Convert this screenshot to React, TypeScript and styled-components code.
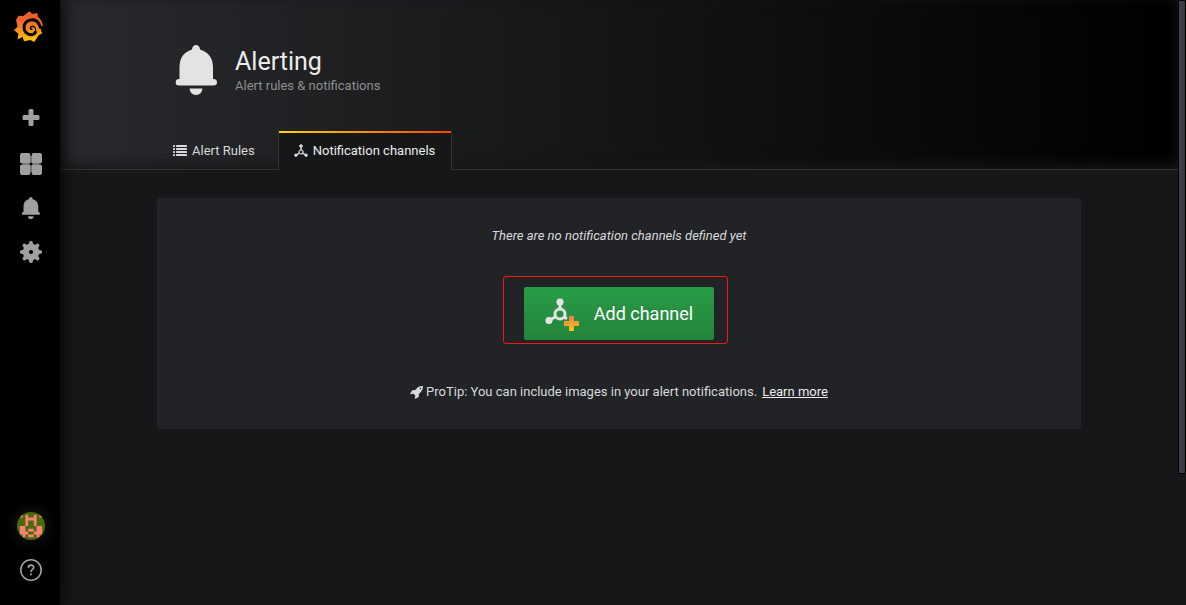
import React from "react";
import styled, { createGlobalStyle, css } from "styled-components";

const GlobalStyle = createGlobalStyle`
  *, *::before, *::after { box-sizing: border-box; }
  body {
    margin: 0;
    background: #161719;
    color: #d8d9da;
    font-family: Roboto, "Liberation Sans", sans-serif;
    font-size: 13px;
    line-height: 20px;
    overflow: hidden;
  }
`;

const Shell = styled.div`
  display: flex;
  min-height: 100vh;
`;

const SideMenu = styled.nav`
  display: flex;
  flex-direction: column;
  flex: none;
  width: 60px;
  padding-bottom: 13px;
  background: #000;
  box-shadow: 0 0 20px #000;
  z-index: 2;
`;

const LogoLink = styled.a`
  display: flex;
  align-items: flex-start;
  padding: 11px 14px 0;
  height: 98px;
`;

const Spacer = styled.div`
  flex: 1;
`;

const MenuLink = styled.a<{ $wide?: boolean }>`
  display: flex;
  align-items: center;
  height: 44px;
  padding-left: ${(p) => (p.$wide ? 17 : 20)}px;
  color: #9fa0a1;
`;

const Avatar = styled.svg`
  width: 28px;
  height: 28px;
  border-radius: 50%;
  box-shadow: 0 0 14px 2px #161719;
`;

const Content = styled.div`
  display: flex;
  flex-direction: column;
  flex: 1;
  min-width: 0;
`;

const ScrollTrack = styled.div`
  flex: none;
  width: 8px;
`;

const PageHeader = styled.header`
  background: linear-gradient(90deg, #292a2d, #000);
  box-shadow: inset 0 -4px 14px #161719;
  border-bottom: 1px solid #343436;
  padding-top: 45px;
`;

const Container = styled.div`
  max-width: 980px;
  margin: 0 auto;
  padding: 0 28px;
`;

const TitleRow = styled.div`
  display: flex;
  gap: 14px;
  height: 50px;
  margin: 0 0 36px 14px;
`;

const Title = styled.h1`
  margin: 3px 0 0;
  font-size: 25px;
  line-height: 28px;
  font-weight: 400;
  color: #ececec;
`;

const Subtitle = styled.div`
  color: #8e8e8e;
`;

const Tabs = styled.nav`
  display: flex;
`;

const Tab = styled.a<{ $active?: boolean }>`
  position: relative;
  display: flex;
  align-items: center;
  gap: 5px;
  height: 38px;
  margin-right: 9px;
  padding: 2px 14px 0 16px;
  color: #d8d9da;
  text-decoration: none;
  ${(p) =>
    p.$active &&
    css`
      height: 39px;
      margin: 0 0 -1px;
      padding: 0 16px 0 15px;
      color: #ececec;
      background: #161719;
      border: 1px solid #343436;
      border-width: 0 1px;
      border-radius: 2px 2px 0 0;
      &::before {
        content: "";
        position: absolute;
        top: 0;
        left: 0;
        right: 0;
        height: 2px;
        background: linear-gradient(90deg, #ffd500, #ff4400 99%);
      }
    `}
`;

const Panel = styled.section`
  display: flex;
  flex-direction: column;
  align-items: center;
  margin-top: 28px;
  padding: 28px 28px 27px;
  border-radius: 3px;
  background: #222326;
`;

const EmptyText = styled.p`
  margin: 0 0 41px;
  font-style: italic;
`;

const ButtonArea = styled.div`
  position: relative;
  margin-bottom: 42px;
`;

const Highlight = styled.div`
  position: absolute;
  top: -11px;
  bottom: -4px;
  left: -21px;
  right: -14px;
  border: 1px solid #f2180e;
  border-radius: 3px;
  pointer-events: none;
`;

const AddButton = styled.button`
  display: flex;
  align-items: center;
  gap: 14px;
  height: 53px;
  padding: 0 21px;
  border: 0;
  border-radius: 2px;
  background: linear-gradient(#299c46, #23843b);
  color: #fff;
  font: 400 18px/24px Roboto, "Liberation Sans", sans-serif;
  text-shadow: 0 -1px 0 rgba(0, 0, 0, 0.1);
`;

const ProTip = styled.div`
  display: flex;
  align-items: center;
  gap: 3px;
`;

const LearnMore = styled.a`
  margin-left: 2px;
  color: #ececec;
`;

const ScrollThumb = styled.div`
  position: fixed;
  top: 0;
  right: 0;
  width: 8px;
  height: 474px;
  border: 1px solid #000;
  background: linear-gradient(90deg, #424251, #36363c);
`;

const Logo = () => (
  <svg width="29" height="31" viewBox="42 33 87 93" aria-hidden="true">
    <linearGradient id="brand" x1="0" y1="0" x2="0" y2="1">
      <stop offset="0" stopColor="#f05a28" />
      <stop offset="0.3" stopColor="#f2642a" />
      <stop offset="1" stopColor="#fbca0a" />
    </linearGradient>
    <path
      fill="url(#brand)"
      d="M88 34L97 42L112 39L114 51Q126 59 128 77L123 92L127 100L116 106L103 126L91 120L72 124L68 111L53 118L55 101L42 90L53 80L48 60L56 47L70 48L78 42Z"
    />
    <g fill="none" stroke="#000" strokeLinecap="round" strokeLinejoin="round">
      <path d="M132 86L121 82C117 66 108 59 97 59C81 59 72 70 72 82C72 95 82 104 93 104C99 104 104 101 106 97" strokeWidth="9" />
      <path d="M105 98C108 92 107 84 103 81C98 77 92 79 91 84C91 87 94 89 96 87" strokeWidth="4" />
    </g>
  </svg>
);

const BellIcon = ({ width, height }: { width: number; height: number }) => (
  <svg width={width} height={height} viewBox="0 0 42 50" fill="currentColor" aria-hidden="true">
    <path d="M16.500 4.500C16.500 1.800 18.400 0 20.500 0S24.500 1.800 24.500 4.500C31.500 6.500 37.500 12 37.500 22V34H38Q41.500 34.300 41.500 37.500 41.500 40.500 38 40.500H3.500Q0 40.500 0 37.500 0 34.300 3.500 34H4V22C4 12 9.500 6.500 16.500 4.500Z" />
    <path d="M14 43.500H27Q26.300 50 20.500 50T14 43.500Z" />
  </svg>
);

const ChannelIcon = () => (
  <svg width="14" height="14" viewBox="0 0 14 14" fill="#d8d9da" stroke="#d8d9da" aria-hidden="true">
    <circle cx="7" cy="2" r="1.300" />
    <circle cx="1.900" cy="11.200" r="1.200" />
    <circle cx="12.100" cy="11.200" r="1.200" />
    <circle cx="7" cy="8" r="2" fill="none" strokeWidth="1.200" />
    <path d="M7 2V6.500M5.500 9L2 11.200M8.500 9L12 11.200" strokeWidth="1.400" />
  </svg>
);

const gearTeeth = [0, 45, 90, 135, 180, 225, 270, 315];

export default function App() {
  return (
    <>
      <GlobalStyle />
      <Shell>
        <SideMenu aria-label="Main menu">
          <LogoLink href="#" aria-label="Home">
            <Logo />
          </LogoLink>
          <MenuLink href="#" aria-label="Create">
            <svg width="22" height="22" viewBox="0 0 22 22" fill="currentColor">
              <rect x="8.500" y="0" width="5" height="17" rx="1.500" />
              <rect x="2.500" y="6" width="17" height="5" rx="1.500" />
            </svg>
          </MenuLink>
          <MenuLink href="#" aria-label="Dashboards">
            <svg width="22" height="22" viewBox="0 0 22 22" fill="currentColor">
              <path d="M10 3h2v16h-2zM3 10h16v2H3z" fill="#555" />
              <rect width="10.400" height="10.400" rx="2" />
              <rect x="11.600" width="10.400" height="10.400" rx="2" />
              <rect y="11.600" width="10.400" height="10.400" rx="2" />
              <rect x="11.600" y="11.600" width="10.400" height="10.400" rx="2" />
              <path d="M10 10h2v2h-2z" fill="#000" />
            </svg>
          </MenuLink>
          <MenuLink href="#" aria-label="Alerting">
            <BellIcon width={22} height={22} />
          </MenuLink>
          <MenuLink href="#" aria-label="Configuration">
            <svg width="22" height="22" viewBox="0 0 22 22" fill="currentColor">
              {gearTeeth.map((a) => (
                <path key={a} d="M8.500 4L9.400 0.800Q9.600 0 10.300 0H11.700Q12.400 0 12.600 0.800L13.500 4Z" transform={`rotate(${a} 11 11)`} />
              ))}
              <path fillRule="evenodd" d="M11 2.800a8.200 8.200 0 1 0 0 16.400a8.200 8.200 0 1 0 0-16.400zM11 8.900a2.100 2.100 0 1 1 0 4.200a2.100 2.100 0 1 1 0-4.200z" />
            </svg>
          </MenuLink>
          <Spacer />
          <MenuLink href="#" $wide aria-label="Profile">
            <Avatar viewBox="0 0 10 10">
              <rect width="10" height="10" fill="#4b6a0c" />
              <path
                fill="#fa8272"
                d="M1 1h1v1h-1zM8 1h1v1h-1zM3 1h1v1h2v-1h1v4h-1v-2h-2v2h-1zM1 5h2v2h1v1h-1v1h-1v-1h-1zM7 5h2v3h-1v1h-1v-1h-1v-1h1zM4 6h2v1h-2zM4 8h2v1h-2z"
              />
            </Avatar>
          </MenuLink>
          <MenuLink href="#" aria-label="Help">
            <svg width="22" height="22" viewBox="0 0 22 22" fill="none" stroke="currentColor">
              <circle cx="11" cy="11" r="10.200" strokeWidth="1.600" />
              <path d="M8.300 8.700C8.300 5.300 13.700 5.300 13.700 8.600C13.700 10.500 11 10.500 11 13" strokeWidth="1.700" />
              <path d="M11 14.500V16.300" strokeWidth="1.800" />
            </svg>
          </MenuLink>
        </SideMenu>
        <Content>
          <PageHeader>
            <Container>
              <TitleRow>
                <svg width="50" height="50" viewBox="-4.500 0 50 50" color="#e3e3e3" aria-hidden="true">
                  <BellIcon width={42} height={50} />
                </svg>
                <div>
                  <Title>Alerting</Title>
                  <Subtitle>Alert rules &amp; notifications</Subtitle>
                </div>
              </TitleRow>
              <Tabs aria-label="Alerting sections">
                <Tab href="#">
                  <svg width="14" height="14" viewBox="0 0 14 14" fill="currentColor" aria-hidden="true">
                    {[1, 4, 7, 10].map((y) => (
                      <g key={y}>
                        <rect y={y} width="2" height="2" rx="0.400" />
                        <rect x="3" y={y} width="11" height="2" rx="0.400" />
                      </g>
                    ))}
                  </svg>
                  Alert Rules
                </Tab>
                <Tab href="#" $active aria-current="page">
                  <ChannelIcon />
                  Notification channels
                </Tab>
              </Tabs>
            </Container>
          </PageHeader>
          <main>
            <Container>
              <Panel>
                <EmptyText>There are no notification channels defined yet</EmptyText>
                <ButtonArea>
                  <AddButton type="button">
                    <svg width="35" height="36" viewBox="0 0 35 36" aria-hidden="true">
                      <linearGradient id="plus" x1="0" y1="0" x2="0" y2="1">
                        <stop offset="0" stopColor="#ef7b48" />
                        <stop offset="1" stopColor="#fbc51a" />
                      </linearGradient>
                      <g fill="#e3e3e3" stroke="#e3e3e3">
                        <circle cx="15" cy="6" r="3.200" />
                        <circle cx="4" cy="24.500" r="3.200" />
                        <circle cx="15" cy="18" r="5" fill="none" strokeWidth="3" />
                        <path d="M15 6V13.500M11 20.500L4 24.500M18.500 21L22 22.500" strokeWidth="3" />
                      </g>
                      <path d="M24 20H29V25H34V30H29V35H24V30H19V25H24Z" fill="url(#plus)" />
                    </svg>
                    Add channel
                  </AddButton>
                  <Highlight />
                </ButtonArea>
                <ProTip>
                  <svg width="13" height="13" viewBox="0 0 1664 1664" fill="currentColor" aria-hidden="true">
                    <path d="M1440 320q0-40-28-68t-68-28-68 28-28 68 28 68 68 28 68-28 28-68zm224-288q0 249-75.500 430.500t-253.500 360.500q-81 80-195 176l-20 379q-2 16-16 26l-384 224q-7 4-16 4-12 0-23-9l-64-64q-13-14-8-32l85-276-281-281-276 85q-3 1-9 1-14 0-23-9l-64-64q-17-19-5-39l224-384q10-14 26-16l379-20q96-114 176-195 188-187 358-258t431-71q14 0 24 9.500t10 22.500z" />
                  </svg>
                  ProTip: You can include images in your alert notifications.
                  <LearnMore href="#">Learn more</LearnMore>
                </ProTip>
              </Panel>
            </Container>
          </main>
        </Content>
        <ScrollTrack />
      </Shell>
      <ScrollThumb />
    </>
  );
}
